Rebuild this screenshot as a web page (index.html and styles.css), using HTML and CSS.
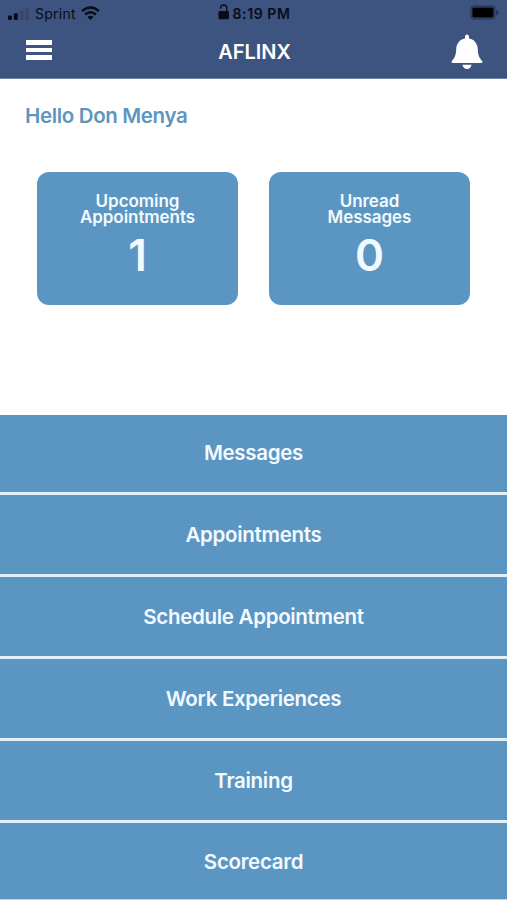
FILE: index.html
```html
<!DOCTYPE html>
<html lang="en">
<head>
<meta charset="utf-8">
<title>AFLINX</title>
<link rel="stylesheet" href="styles.css">
</head>
<body>
<header class="header">
  <div class="status">
    <div class="carrier">
      <svg class="signal" width="21" height="14" viewBox="0 0 21 14"><rect x="0" y="8.5" width="4" height="4.5" rx="1"/><rect x="5.8" y="6.2" width="4" height="6.8" rx="1"/><g fill="#39466f"><rect x="11.6" y="3.5" width="4" height="9.5" rx="1"/><rect x="17.2" y="0.8" width="3.8" height="12.2" rx="1"/></g></svg>
      <span class="carrier-name">Sprint</span>
      <svg class="wifi" width="19" height="14" viewBox="0 0 19 14"><g fill="none" stroke="#080c18" stroke-width="2.4"><path d="M1 5.1Q9.5-2 18 5.1"/><path d="M4 8.5Q9.5 4 15 8.5"/></g><path d="M6.4 11Q9.5 8.4 12.6 11L9.5 14Z"/></svg>
    </div>
    <div class="clock">
      <svg width="12" height="16" viewBox="0 0 12 16"><rect x="0.5" y="7" width="10.5" height="8.3" rx="1.3"/><path d="M2.6 4.8V4Q2.6 1 5.7 1T8.8 4V7.5" fill="none" stroke="#080c18" stroke-width="1.4"/></svg>
      <span>8:19 PM</span>
    </div>
    <svg class="battery" width="30" height="16" viewBox="0 0 30 16"><rect x="1" y="1.2" width="23.8" height="12.6" rx="2.6" fill="none" stroke="#263657" stroke-width="1.2"/><rect x="2.3" y="2.6" width="21.2" height="9.8" rx="1.3" fill="#000"/><path d="M26.2 4.7Q28.6 5.5 28.6 7.5T26.2 10.3Z" fill="#22314f"/></svg>
  </div>
  <div class="navbar">
    <div class="burger"><i></i><i></i><i></i></div>
    <h1 class="title">AFLINX</h1>
    <svg class="bell" width="32" height="36" viewBox="0 0 32 36" fill="#fff"><path d="M16 .4C17.3.4 18 1.5 18 3.1V4.6C23.5 5.6 26.5 9.8 26.8 15.3C27.1 21.5 28.3 24 31 26.7C31.8 27.6 31.5 28.9 30.2 28.9H1.8C.5 28.9.2 27.6 1 26.7C3.7 24 4.9 21.5 5.2 15.3C5.5 9.8 8.5 5.6 14 4.6V3.1C14 1.5 14.7.4 16 .4Z"/><path d="M11.5 30.8H20.5C20.2 33.5 18.5 35 16 35S11.8 33.5 11.5 30.8Z"/></svg>
  </div>
</header>
<main>
  <p class="greeting">Hello Don Menya</p>
  <section class="cards">
    <div class="card"><div class="label">Upcoming<br>Appointments</div><div class="count">1</div></div>
    <div class="card"><div class="label">Unread<br>Messages</div><div class="count">0</div></div>
  </section>
  <nav class="menu">
    <a>Messages</a>
    <a>Appointments</a>
    <a>Schedule Appointment</a>
    <a>Work Experiences</a>
    <a>Training</a>
    <a>Scorecard</a>
  </nav>
</main>
</body>
</html>
```
FILE: styles.css
```css
* { box-sizing: border-box; }
body {
  margin: 0;
  height: 900px;
  overflow: hidden;
  background: #fff;
  font-family: Inter, "Liberation Sans", sans-serif;
  color: #f3faff;
}
svg { display: block; }
.header {
  height: 79px;
  background: #3c547f;
  border-bottom: 1px solid #7182a5;
}
.status {
  display: grid;
  grid-template-columns: 1fr auto 1fr;
  align-items: center;
  height: 27px;
  padding: 0 7px 0 8px;
  color: #080c18;
  fill: #080c18;
}
.carrier { display: flex; align-items: center; font-size: 14px; }
.carrier-name { width: 42px; margin: 0 4px 0 6px; letter-spacing: .25px; }
.wifi { margin-top: -1px; }
.clock { display: flex; align-items: center; gap: 3px; font-size: 14px; font-weight: 600; letter-spacing: .6px; }
.clock svg { margin-top: -3px; }
.battery { justify-self: end; margin-top: -1px; }
.navbar {
  display: grid;
  grid-template-columns: 1fr auto 1fr;
  align-items: center;
  height: 51px;
  padding: 0 24px 0 26px;
}
.burger { display: grid; gap: 3px; width: 26px; margin-top: -5px; }
.burger i { height: 4.5px; background: #fff; }
.title { margin: -1px 0 0; font-size: 20px; line-height: 24px; font-weight: 600; color: #fff; }
.bell { justify-self: end; margin-top: -1px; }
.greeting {
  margin: 25px 0 0 25px;
  font-size: 20.5px;
  line-height: 24px;
  font-weight: 600;
  letter-spacing: -.35px;
  color: #5e95c0;
}
.cards {
  display: grid;
  grid-template-columns: 201px 201px;
  gap: 31px;
  margin: 44px 0 0 37px;
}
.card {
  height: 133px;
  padding-top: 21px;
  border-radius: 12px;
  background: #5b96c3;
  text-align: center;
}
.label { font-size: 17px; line-height: 16px; font-weight: 600; letter-spacing: -.05px; }
.count { margin-top: 5px; font-size: 44px; line-height: 50px; font-weight: 600; }
.menu { margin-top: 110px; background: #e1f0fa; border-bottom: 1px solid #c5d9e8; }
.menu a {
  display: flex;
  align-items: center;
  justify-content: center;
  height: 79px;
  background: #5b96c3;
  font-size: 20.5px;
  line-height: 24px;
  font-weight: 600;
  letter-spacing: -.3px;
}
.menu a + a { margin-top: 3px; }
.menu a:first-child { height: 77px; padding-bottom: 2px; }
.menu a:last-child { height: 76px; padding-top: 2px; }
```
